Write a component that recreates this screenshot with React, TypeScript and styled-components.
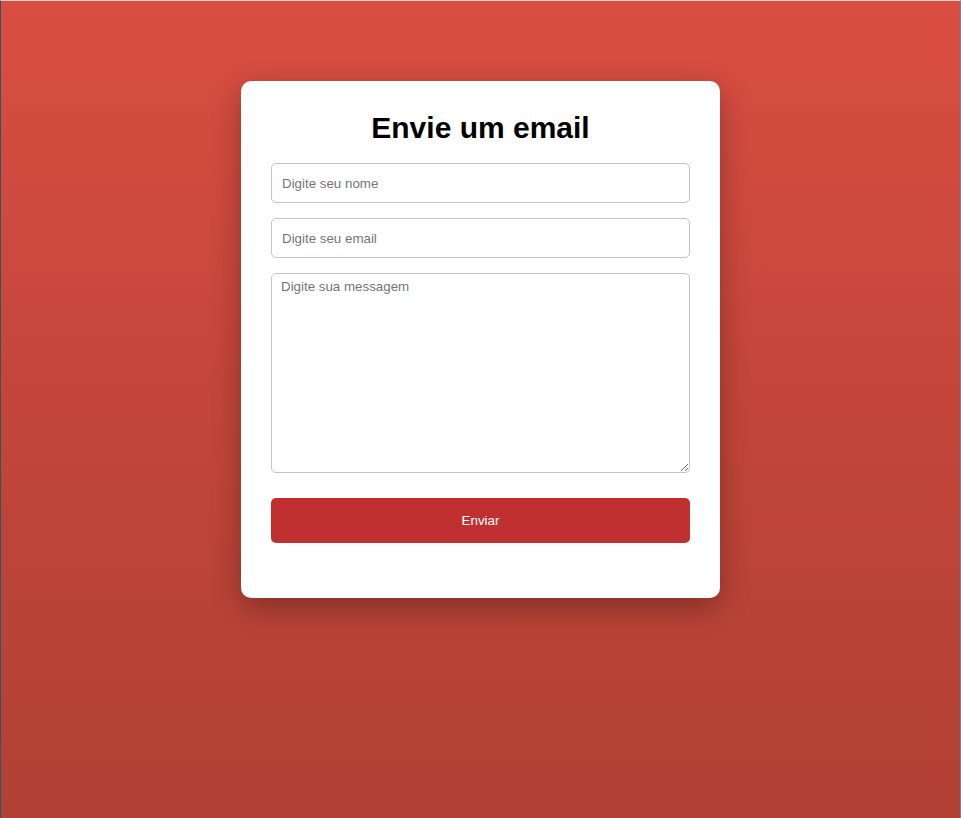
import styled, { createGlobalStyle } from "styled-components";

const GlobalStyle = createGlobalStyle`
  * {
    box-sizing: border-box;
  }
  html, body {
    margin: 0;
    padding: 0;
  }
  body {
    font-family: "Liberation Sans", Arial, sans-serif;
  }
`;

const Page = styled.div`
  min-height: 818px;
  background: linear-gradient(180deg, #da4e42 0%, #c5463b 45%, #b04134 100%);
  border-top: 1px solid #d2d2d2;
  border-left: 1px solid #2d566c;
  border-right: 1px solid #6d8594;
  display: flex;
  flex-direction: column;
  align-items: center;
  padding-top: 80px;
`;

const Card = styled.div`
  width: 479px;
  background: #fff;
  border-radius: 10px;
  padding: 30px 30px 55px;
  box-shadow: 0 10px 30px rgba(0, 0, 0, 0.3);
`;

const Title = styled.h2`
  margin: 0 0 18px;
  font-size: 30px;
  font-weight: 700;
  color: #000;
  text-align: center;
`;

const Form = styled.form`
  display: flex;
  flex-direction: column;
  gap: 15px;
`;

const fieldBase = `
  width: 100%;
  border: 1px solid #c4c4c4;
  border-radius: 5px;
  font-family: "Liberation Sans", Arial, sans-serif;
  font-size: 13.333px;
  color: #000;
  outline: none;
  &::placeholder {
    color: #757575;
  }
`;

const Input = styled.input`
  ${fieldBase}
  height: 40px;
  padding: 0 10px;
`;

const TextArea = styled.textarea`
  ${fieldBase}
  height: 200px;
  padding: 5px 9px;
  display: block;
`;

const Button = styled.button`
  margin-top: 10px;
  height: 45px;
  border: none;
  border-radius: 5px;
  background: #c03030;
  color: #fff;
  font-family: "Liberation Sans", Arial, sans-serif;
  font-size: 13.333px;
  cursor: pointer;
`;

export default function App() {
  return (
    <>
      <GlobalStyle />
      <Page>
        <Card>
          <Title>Envie um email</Title>
          <Form onSubmit={(e) => e.preventDefault()}>
            <Input type="text" placeholder="Digite seu nome" />
            <Input type="email" placeholder="Digite seu email" />
            <TextArea placeholder="Digite sua messagem" />
            <Button type="submit">Enviar</Button>
          </Form>
        </Card>
      </Page>
    </>
  );
}
